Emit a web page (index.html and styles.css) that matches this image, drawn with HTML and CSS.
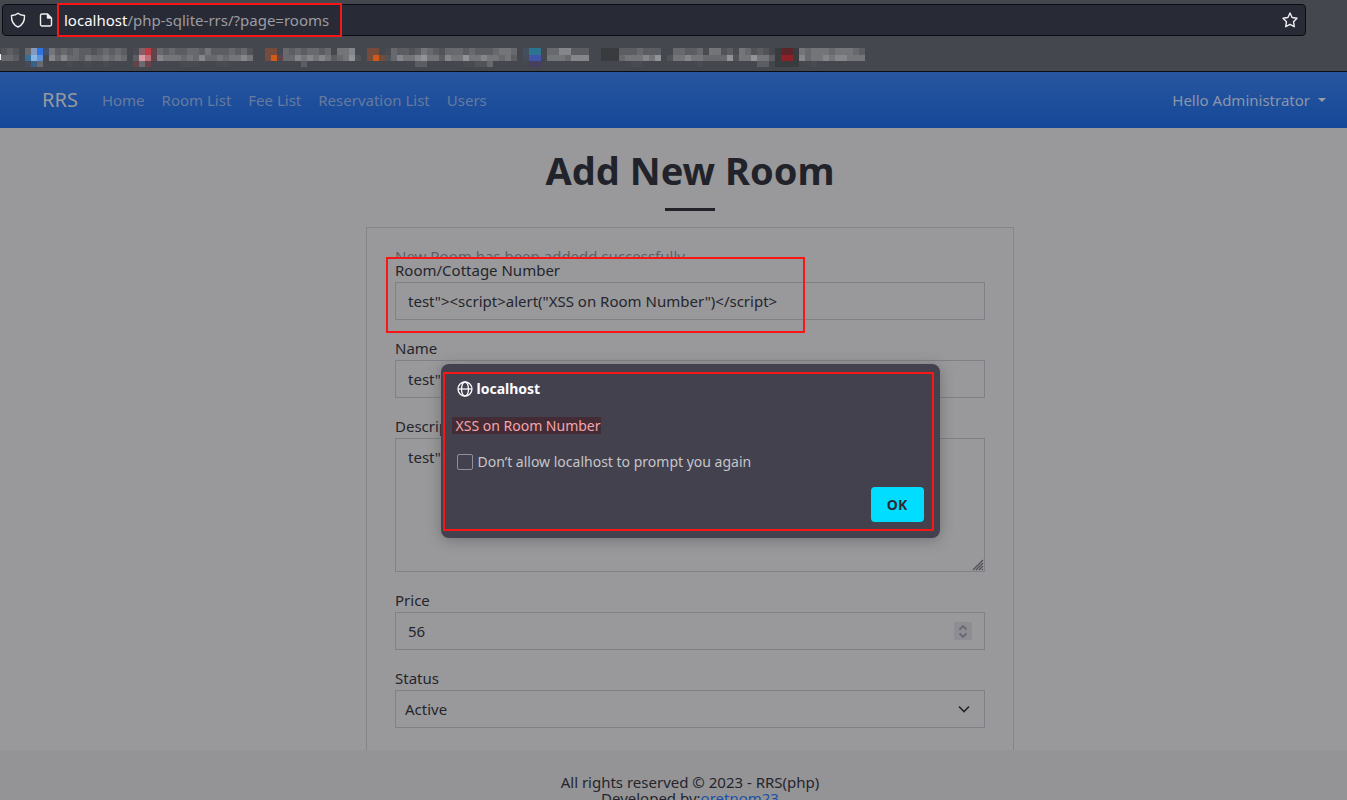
FILE: index.html
```html
<!DOCTYPE html>
<html lang="en">
<head>
<meta charset="utf-8">
<title>RRS - Add New Room</title>
<link rel="stylesheet" href="styles.css">
</head>
<body>
<header class="browser">
  <div class="urlbar">
    <svg class="icon" viewBox="0 0 16 16" aria-hidden="true"><path d="M8 1.200c1.700 1.500 4 2.200 6.500 2.300C14.800 9 12.500 13 8 15 3.500 13 1.200 9 1.500 3.500 4 3.400 6.300 2.700 8 1.200z"/></svg>
    <svg class="icon" viewBox="0 0 16 16" aria-hidden="true"><path d="M4 2h5.500l4 4v6.500a1.500 1.500 0 0 1-1.500 1.500h-8a1.500 1.500 0 0 1-1.500-1.500v-9a1.500 1.500 0 0 1 1.500-1.500z"/><path class="solid" d="M9.500 2.500v3.500h3.500z"/></svg>
    <div class="address"><span class="host">localhost</span>/php-sqlite-rrs/?page=rooms<span class="mark mark-url"></span></div>
    <button class="star" type="button" aria-label="Bookmark this page"><svg class="icon" viewBox="0 0 16 16"><path d="M8 1l2.100 4.500 4.900.700-3.500 3.500.800 5-4.300-2.400-4.300 2.400.800-5L1 6.200l4.900-.700z"/></svg></button>
  </div>
  <svg class="bookmarks" id="bookmarks" width="868" height="28" viewBox="0 0 868 28" shape-rendering="crispEdges" aria-hidden="true"></svg>
</header>

<nav class="nav">
  <a class="brand" href="#">RRS</a>
  <div class="links">
    <a href="#">Home</a><a href="#">Room List</a><a href="#">Fee List</a><a href="#">Reservation List</a><a href="#">Users</a>
  </div>
  <button class="user" type="button">Hello Administrator<span class="caret"></span></button>
</nav>

<main class="page">
  <h1>Add New Room</h1>
  <hr class="rule">
  <form class="card">
    <div class="message">New Room has been addedd successfully.</div>
    <div class="field marked">
      <label for="number">Room/Cottage Number</label>
      <input id="number" type="text" value="test&quot;&gt;&lt;script&gt;alert(&quot;XSS on Room Number&quot;)&lt;/script&gt;">
      <span class="mark mark-field"></span>
    </div>
    <div class="field">
      <label for="name">Name</label>
      <input id="name" type="text" value="test&quot;&gt;">
    </div>
    <div class="field">
      <label for="description">Description</label>
      <div class="control">
        <textarea id="description">test"&gt;</textarea>
        <svg class="grip" viewBox="0 0 12 12" aria-hidden="true"><path d="M1 11L11 1M4 11l7-7M7 11l4-4M10 11l1-1"/></svg>
      </div>
    </div>
    <div class="field">
      <label for="price">Price</label>
      <div class="control">
        <input id="price" type="number" value="56">
        <svg class="spinner" viewBox="0 0 18 18" aria-hidden="true"><path d="M5.500 7.500L9 4l3.500 3.500M5.500 11.500L9 15l3.500-3.500"/></svg>
      </div>
    </div>
    <div class="field">
      <label for="status">Status</label>
      <div class="control">
        <select id="status"><option>Active</option><option>Inactive</option></select>
        <svg class="chevron" viewBox="0 0 16 16" aria-hidden="true"><path d="M3 5.500l5 5 5-5"/></svg>
      </div>
    </div>
  </form>
</main>

<footer class="footer">
  <div>All rights reserved © 2023 - RRS(php)</div>
  <div>Developed by:<a href="#">oretnom23</a></div>
</footer>

<div class="dialog" role="dialog" aria-labelledby="origin">
  <div class="origin" id="origin">
    <svg class="globe" viewBox="0 0 16 16" aria-hidden="true"><circle cx="8" cy="8" r="7"/><ellipse cx="8" cy="8" rx="3.500" ry="7"/><path d="M1 8h14"/></svg>
    localhost
  </div>
  <p class="alert"><span>XSS on Room Number</span></p>
  <label class="prevent"><input type="checkbox">Don’t allow localhost to prompt you again</label>
  <button class="ok" type="button">OK</button>
  <span class="mark mark-dialog"></span>
</div>
<script src="bookmarks.js"></script>
</body>
</html>
```
FILE: styles.css
```css
* { box-sizing: border-box; }

body {
  margin: 0;
  height: 100vh;
  display: flex;
  flex-direction: column;
  overflow: hidden;
  position: relative;
  background: #99999b;
  color: #25252d;
  font: 15px/24px "Noto Sans", sans-serif;
}

button, input, select, textarea { font: inherit; color: inherit; }

/* Browser toolbar */
.browser {
  flex: none;
  height: 72px;
  padding-top: 4px;
  background: #44474e;
  border-bottom: 1px solid #0c0d12;
}
.urlbar {
  display: flex;
  align-items: center;
  height: 32px;
  margin: 0 41px 0 2px;
  padding: 0 7px;
  background: #282a35;
  border: 1px solid #0c0d12;
  border-radius: 4px;
}
.icon {
  display: block;
  flex: none;
  width: 16px;
  height: 16px;
  fill: none;
  stroke: #f0f0f2;
  stroke-width: 1.4;
  stroke-linejoin: round;
}
.icon + .icon { margin: 0 10px 0 12px; }
.icon .solid { fill: #f0f0f2; }
.address {
  position: relative;
  flex: 1;
  color: #9c9ca2;
}
.host { color: #fbfbfe; }
.star { padding: 0; border: 0; background: none; }
.bookmarks { display: block; margin-top: 6px; }

.mark {
  position: absolute;
  border: 2px solid #f81616;
  pointer-events: none;
}
.mark-url { left: -7px; top: -5px; width: 285px; height: 34px; }
.mark-field { left: -9px; top: -1px; width: 419px; height: 76px; }
.mark-dialog { left: 2px; top: 8px; right: 6px; bottom: 7px; }

/* Site navigation */
.nav {
  flex: none;
  display: flex;
  align-items: center;
  height: 56px;
  padding: 0 21px 0 42px;
  background: linear-gradient(#28569f, #154899);
}
.nav a { text-decoration: none; }
.brand { margin-right: 24px; font-size: 20px; color: #98999d; }
.links { display: flex; gap: 17px; flex: 1; }
.links a { color: #667a9f; }
.user {
  display: flex;
  align-items: center;
  gap: 8px;
  padding: 0;
  border: 0;
  background: none;
  color: #8b96a9;
}
.caret {
  border: 4px solid transparent;
  border-top-color: #9a9da4;
  border-bottom: 0;
}

/* Form page */
.page {
  flex: 1;
  min-height: 0;
  overflow: hidden;
  padding: 18px 0 0 33px;
}
h1 {
  margin: 0;
  font-size: 38px;
  line-height: 48px;
  font-weight: 700;
  text-align: center;
  color: #22232a;
}
.rule {
  width: 50px;
  height: 3px;
  margin: 14px auto 16px;
  border: 0;
  background: #22232a;
}
.card {
  max-width: 648px;
  margin: 0 auto;
  padding: 16px 28px 200px;
  border: 1px solid #848589;
}
.message { height: 14px; overflow: hidden; color: #5f6065; }
.field { margin-bottom: 16px; }
.marked, .control { position: relative; }
.field label { display: block; }
.field input, .field select, .field textarea {
  display: block;
  width: 100%;
  height: 38px;
  margin: 0;
  padding: 6px 12px;
  border: 1px solid #7f8088;
  border-radius: 0;
  background: transparent;
  outline: 0;
  appearance: none;
}
.field textarea { height: 134px; resize: none; }
.field select { padding-left: 9px; }
.field input[type="number"] { appearance: textfield; }
.grip, .spinner, .chevron { position: absolute; fill: none; pointer-events: none; }
.grip { right: 1px; bottom: 1px; width: 12px; height: 12px; stroke: #505156; stroke-width: 1.3; }
.spinner { right: 13px; top: 10px; width: 18px; height: 18px; background: #8d8d93; stroke: #68686f; stroke-width: 1.8; }
.chevron { right: 13px; top: 11px; width: 16px; height: 16px; stroke: #25252d; stroke-width: 1.6; }

.footer {
  flex: none;
  height: 50px;
  overflow: hidden;
  padding: 24px 0 0 33px;
  background: #949496;
  line-height: 16px;
  text-align: center;
}
.footer a { color: #1a50a5; }

/* Alert dialog */
.dialog {
  position: absolute;
  left: calc(50% - 233px);
  top: 364px;
  width: 499px;
  height: 174px;
  display: flex;
  flex-direction: column;
  align-items: flex-start;
  padding: 13px 16px 16px;
  border-radius: 8px;
  background: #42414d;
  color: #fbfbfe;
  font-size: 14px;
  box-shadow: 0 2px 14px rgba(58, 57, 68, 0.4);
}
.origin { display: flex; align-items: center; gap: 4px; font-weight: 700; }
.globe { width: 16px; height: 16px; fill: none; stroke: #fbfbfe; stroke-width: 1.3; }
.alert { margin: 12px 0; color: #f5a5ab; }
.alert span { display: block; line-height: 17px; margin: 4px 0 4px -5px; padding-left: 4px; background: #432c36; }
.prevent { display: flex; align-items: center; gap: 5px; color: #c5c5cb; }
.prevent input {
  appearance: none;
  width: 16px;
  height: 16px;
  margin: 0;
  border: 1px solid #8f8f9d;
  border-radius: 2px;
}
.ok {
  align-self: flex-end;
  width: 53px;
  height: 35px;
  margin-top: auto;
  padding: 0;
  border: 0;
  border-radius: 4px;
  background: #00ddff;
  color: #2b2a33;
  font-weight: 700;
}
```
FILE: bookmarks.js
```js
// Pixelated bookmark strip: each letter is one 6px cell of the mosaic.
const shades = {
  a: '#4a4b50', b: '#525357', c: '#5c5d62', d: '#68696e', e: '#747579', f: '#85868b', g: '#929398', k: '#3a3b3f',
  A: '#8299c0', B: '#2d73e6', C: '#444f6b', D: '#357199', E: '#87b3e2', F: '#5f90d8', G: '#3c5f84', H: '#454b58',
  I: '#865f66', J: '#c23b42', K: '#60444a', L: '#d99aa4', M: '#bd6f79', N: '#6b4049', O: '#754c3c', P: '#cf5a1a',
  Q: '#43505f', R: '#2d7490', S: '#4055a8', T: '#473e60', U: '#5c2529', V: '#8c2228'
};
// Each row lists [start column, cells].
const rows = [
  { y: 6, h: 7, runs: [[0, 'bcb'], [4, 'dABC'], [8, 'ecdcdccbcdcdc'], [22, 'aIJK'], [26, 'dcdccddcecccdcdb'], [44, 'OO'], [47, 'dcdcddcd'], [56, 'eef'], [61, 'OO'], [64, 'adccbcedcbdddcdcccdeed'], [87, 'QRR'], [91, 'ddffccc'], [100, 'kkk'], [103, 'cccdccc'], [112, 'ddccdaeebca'], [123, 'edbcb'], [129, 'kUUk'], [133, 'edeeedeeedc']] },
  { y: 13, h: 6, runs: [[0, 'ddc'], [4, 'DEF'], [8, 'fdfddceddeded'], [22, 'cLMK'], [26, 'feeededfddedeefe'], [44, 'OPK'], [47, 'ddfefefecdegb'], [61, 'OPO'], [64, 'bdfeefgeecfeegeefeedec'], [87, 'HSS'], [91, 'eeedfff'], [100, 'kkk'], [103, 'deeefeg'], [111, 'beefeeddddgbeegeec'], [129, 'kVVk'], [133, 'fdeefeffeee']] },
  { y: 19, h: 6, runs: [[4, 'HGd'], [11, 'a'], [14, 'a'], [17, 'a'], [22, 'KdN'], [30, 'aaa'], [36, 'aa'], [50, 'c'], [69, 'cc'], [77, 'aabbd'], [88, 'TT'], [105, 'aa'], [116, 'a'], [126, 'cc'], [129, 'kkkk'], [135, 'a']] }
];
const strip = document.getElementById('bookmarks');
function cell(x, y, w, h, fill) {
  const r = document.createElementNS('http://www.w3.org/2000/svg', 'rect');
  Object.entries({ x, y, width: w, height: h, fill }).forEach(([k, v]) => r.setAttribute(k, v));
  strip.appendChild(r);
}
cell(0, 12, 1, 6, '#f0f0f2');
rows.forEach(({ y, h, runs }) => runs.forEach(([start, cells]) =>
  [...cells].forEach((c, i) => cell(1 + 6 * (start + i), y, 6, h, shades[c]))));
```
